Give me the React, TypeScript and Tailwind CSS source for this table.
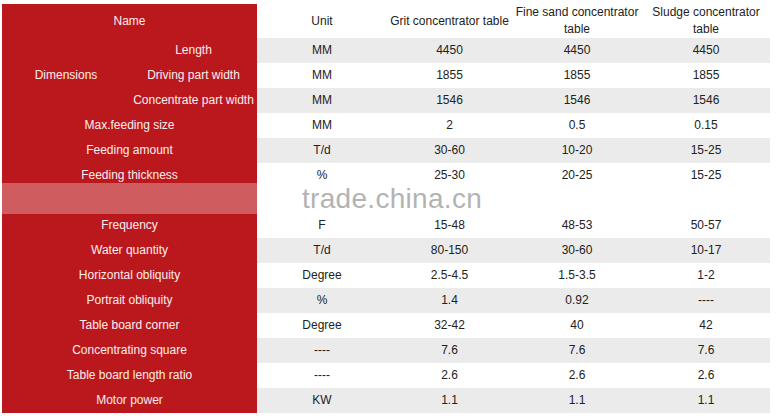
const rows: { name: string; sub?: string; unit: string; vals: [string, string, string] }[] = [
  { name: 'Dimensions', sub: 'Length', unit: 'MM', vals: ['4450', '4450', '4450'] },
  { name: 'Dimensions', sub: 'Driving part width', unit: 'MM', vals: ['1855', '1855', '1855'] },
  { name: 'Dimensions', sub: 'Concentrate part width', unit: 'MM', vals: ['1546', '1546', '1546'] },
  { name: 'Max.feeding size', unit: 'MM', vals: ['2', '0.5', '0.15'] },
  { name: 'Feeding amount', unit: 'T/d', vals: ['30-60', '10-20', '15-25'] },
  { name: 'Feeding thickness', unit: '%', vals: ['25-30', '20-25', '15-25'] },
  { name: '', unit: '', vals: ['', '', ''] },
  { name: 'Frequency', unit: 'F', vals: ['15-48', '48-53', '50-57'] },
  { name: 'Water quantity', unit: 'T/d', vals: ['80-150', '30-60', '10-17'] },
  { name: 'Horizontal obliquity', unit: 'Degree', vals: ['2.5-4.5', '1.5-3.5', '1-2'] },
  { name: 'Portrait obliquity', unit: '%', vals: ['1.4', '0.92', '----'] },
  { name: 'Table board corner', unit: 'Degree', vals: ['32-42', '40', '42'] },
  { name: 'Concentrating square', unit: '----', vals: ['7.6', '7.6', '7.6'] },
  { name: 'Table board length ratio', unit: '----', vals: ['2.6', '2.6', '2.6'] },
  { name: 'Motor power', unit: 'KW', vals: ['1.1', '1.1', '1.1'] },
];

// rows with a grey band, counted from the first data row
const grey = [0, 2, 4, 8, 10, 12, 14];

export default function App() {
  return (
    <div
      className="relative w-[778px] h-[416px] bg-white overflow-hidden"
      style={{ fontFamily: '"Liberation Sans", Arial, sans-serif' }}
    >
      <table className="absolute left-[2px] top-[4px] w-[768px] table-fixed border-collapse text-[12px] leading-[17px] text-[#222]">
        <colgroup>
          <col className="w-[128px]" />
          <col className="w-[127px]" />
          <col className="w-[130px]" />
          <col className="w-[125px]" />
          <col className="w-[130px]" />
          <col className="w-[128px]" />
        </colgroup>
        <thead>
          <tr className="h-[34px]">
            <th colSpan={2} className="bg-[#ba181c] text-[#fbeeee] font-normal p-0 text-center">
              Name
            </th>
            <th className="font-normal p-0 text-center">Unit</th>
            <th className="font-normal p-0 text-center whitespace-nowrap">Grit concentrator table</th>
            <th className="font-normal p-0 text-center">Fine sand concentrator table</th>
            <th className="font-normal p-0 text-center">Sludge concentrator table</th>
          </tr>
        </thead>
        <tbody>
          {rows.map((r, i) => (
            <tr key={i} className={`h-[25px] ${grey.includes(i) ? 'bg-[#ebebeb]' : 'bg-white'}`}>
              {r.sub ? (
                <>
                  {i === 0 && (
                    <td rowSpan={3} className="bg-[#ba181c] text-[#fbeeee] p-0 text-center">
                      {r.name}
                    </td>
                  )}
                  <td className="bg-[#ba181c] text-[#fbeeee] p-0 text-center whitespace-nowrap">{r.sub}</td>
                </>
              ) : (
                <td colSpan={2} className="bg-[#ba181c] text-[#fbeeee] p-0 text-center whitespace-nowrap">
                  {r.name}
                </td>
              )}
              <td className="p-0 text-center">{r.unit}</td>
              {r.vals.map((v, j) => (
                <td key={j} className="p-0 text-center">
                  {v}
                </td>
              ))}
            </tr>
          ))}
        </tbody>
      </table>

      {/* watermark band */}
      <div className="absolute left-[2px] top-[183px] w-[255px] h-[31px] bg-white/30" />
      <div className="absolute left-[302px] top-[183px] h-[31px] flex items-center text-[28px] text-[#b3b3b3] tracking-[0.3px]">
        trade.china.cn
      </div>
    </div>
  );
}
